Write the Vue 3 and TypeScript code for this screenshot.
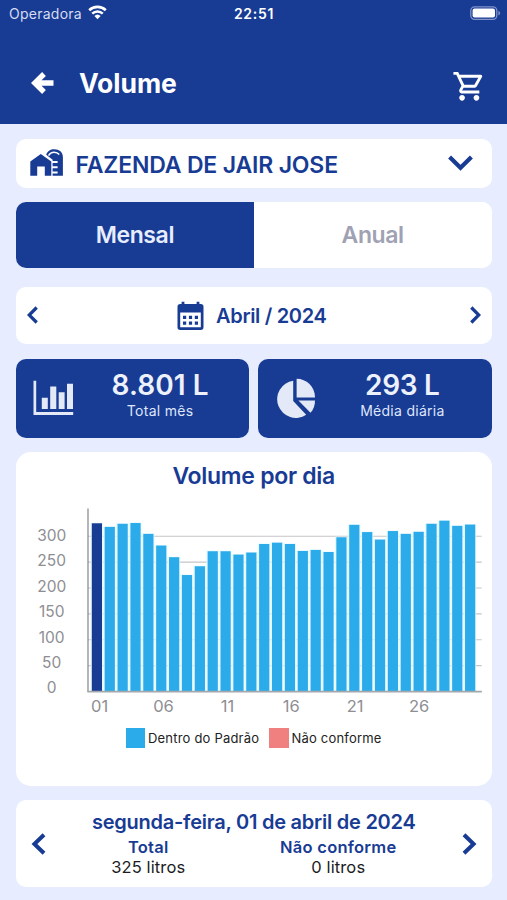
<script setup lang="ts">
interface Bar {
  day: number
  value: number
  x: number
  y: number
  height: number
}

const BASE_Y = 183.5
const PX_PER_LITRE = 25.88 / 50
const FIRST_X = 71.8
const PITCH = 12.87

const volumes: number[] = [
  325, 318, 324, 325.5, 304.5, 282, 259.5, 225, 242, 271, 271, 264.5, 268.5, 285, 287.5,
  285, 271.5, 273.5, 269.5, 298, 322, 308, 293.5, 310, 304.5, 308.5, 324, 330, 320, 322.5,
]

const bars: Bar[] = volumes.map((value, i) => ({
  day: i + 1,
  value,
  x: FIRST_X + i * PITCH,
  y: BASE_Y - value * PX_PER_LITRE,
  height: value * PX_PER_LITRE,
}))

const ticks = [300, 250, 200, 150, 100, 50, 0].map((value, i) => ({
  value,
  line: BASE_Y - value * PX_PER_LITRE,
  label: 33 + i * 25.4,
}))

const dayLabels = ['01', '06', '11', '16', '21', '26'].map((text, i) => ({
  text,
  x: 79.6 + i * 63.9,
}))
</script>

<template>
  <div class="screen">
    <header class="header">
      <div class="status">
        <div class="carrier">
          <span class="carrier-name">Operadora</span>
          <svg class="wifi" viewBox="0 0 18 14" width="19" height="14.500">
            <path d="M1 5.100a11.400 11.400 0 0 1 16 0" fill="none" stroke="#fff" stroke-width="2.500" />
            <path d="M3.900 8.300a7.200 7.200 0 0 1 10.200 0" fill="none" stroke="#fff" stroke-width="2.400" />
            <path d="M9 13.800 6 10.700a4.300 4.300 0 0 1 6 0z" fill="#fff" />
          </svg>
        </div>
        <span class="time">22:51</span>
        <svg class="battery" viewBox="0 0 31 15" width="31" height="15">
          <rect x=".8" y=".8" width="26" height="12.600" rx="3.800" fill="none" stroke="#8193c7" stroke-width="1.300" />
          <rect x="2.600" y="2.600" width="22.400" height="9" rx="2" fill="#fff" />
          <path d="M28.400 5v4.400c1-.4 1.700-1.200 1.700-2.200s-.7-1.800-1.700-2.200z" fill="#8193c7" />
        </svg>
      </div>
      <div class="titlebar">
        <svg class="back" viewBox="0 0 24 24" width="24" height="24">
          <path d="M13 3 3.800 12l9.200 9M4.500 12h18" fill="none" stroke="#fff" stroke-width="5.400" />
        </svg>
        <h1 class="title">Volume</h1>
        <svg class="cart" viewBox="0 0 24 24" width="34.500" height="34.500">
          <path fill="#fff" d="M15.550 13c.75 0 1.410-.41 1.750-1.030l3.580-6.490A.996.996 0 0 0 20.010 4H5.210l-.94-2H1v2h2l3.600 7.590-1.350 2.440C4.520 15.370 5.480 17 7 17h12v-2H7l1.100-2h7.450zM6.160 6h12.150l-2.760 5H8.530L6.160 6zM7 18c-1.100 0-1.990.9-1.990 2S5.900 22 7 22s2-.9 2-2-.9-2-2-2zm10 0c-1.100 0-1.990.9-1.990 2s.89 2 1.990 2 2-.9 2-2-.9-2-2-2z" />
        </svg>
      </div>
    </header>

    <main class="content">
      <section class="card farm">
        <svg class="barn" viewBox="0 0 34 28" width="34" height="28">
          <path fill="#183b94" d="M.3 12.400 10.800 5 21.300 12.400V26.800H14.800V17.600H7.200v9.200H.3z" />
          <path fill="#183b94" d="M22.600 10.700 16.200 5.800C17.200 2.300 20.400.3 24.300.3c5 0 8.600 3 8.600 7.600v18.900H22.600V24.400h5v-2h-5v-3.200h5v-2h-5v-3.200h5v-2h-5z" />
          <path d="M18.600 6.600c1.200-2.200 3.100-3.300 5.500-3.300 2.200 0 4 .9 5.200 2.300" fill="none" stroke="#fff" stroke-width="1.500" />
        </svg>
        <span class="farm-name">FAZENDA DE JAIR JOSE</span>
        <svg class="chev-down" viewBox="0 0 25 16" width="25" height="16">
          <path d="m1.600 2 10.900 10.700L23.400 2" fill="none" stroke="#183b94" stroke-width="4.200" />
        </svg>
      </section>

      <div class="tabs">
        <button class="tab active"><span>Mensal</span></button>
        <button class="tab"><span>Anual</span></button>
      </div>

      <section class="card month">
        <svg viewBox="0 0 11 18" width="11" height="18">
          <path d="M9.700 1.500 2.200 9l7.500 7.500" fill="none" stroke="#183b94" stroke-width="3.200" />
        </svg>
        <div class="month-label">
          <svg viewBox="0 0 27 30" width="27" height="30">
            <path fill="#183b94" fill-rule="evenodd" d="M4.600.8h2.800V3h12.200V.8h2.800V3h1.400a2.700 2.700 0 0 1 2.700 2.700v20.600a2.700 2.700 0 0 1-2.700 2.700H3.200a2.700 2.700 0 0 1-2.700-2.700V5.700A2.700 2.700 0 0 1 3.200 3h1.400zM3.200 11.500v14.800h20.600V11.500z" />
            <path fill="#183b94" d="M6 14.800h3.200V18H6zm5.900 0h3.200V18h-3.200zm5.900 0H21V18h-3.200zM6 20.600h3.200v3.200H6zm5.900 0h3.200v3.200h-3.200zm5.900 0H21v3.200h-3.200z" />
          </svg>
          <span>Abril / 2024</span>
        </div>
        <svg viewBox="0 0 11 18" width="11" height="18">
          <path d="M1.300 1.500 8.800 9l-7.500 7.500" fill="none" stroke="#183b94" stroke-width="3.200" />
        </svg>
      </section>

      <div class="stats">
        <section class="stat">
          <svg viewBox="0 0 41 36" width="41" height="36">
            <path fill="#e4e9f7" d="M.5.7h2.700v31.400h37v3H.5z" />
            <path fill="#e4e9f7" d="M8.800 17.700h6v11.200h-6zM17.200 6.500h6.100v22.400h-6.100zM25.700 12.200h5.900v16.700h-5.900zM34 3.800h6v25.100h-6z" />
          </svg>
          <div class="stat-text">
            <strong class="v1">8.801 L</strong>
            <span>Total mês</span>
          </div>
        </section>
        <section class="stat second">
          <svg viewBox="0 0 41 41" width="41" height="41">
            <path fill="#e4e9f7" d="M18.200 2.700V23l13 13.800A18.700 18.700 0 1 1 18.200 2.700z" />
            <path fill="#e4e9f7" d="M21.600.7C31.500.7 40 8.500 40 19.500H21.600z" />
            <path fill="#e4e9f7" d="M23.400 22.500H40c0 5-1.500 9-4.500 12.300z" />
          </svg>
          <div class="stat-text">
            <strong class="v2">293 L</strong>
            <span>Média diária</span>
          </div>
        </section>
      </div>

      <section class="card chart">
        <h2>Volume por dia</h2>
        <svg class="plot" viewBox="0 0 450 210" width="450" height="210">
          <g v-for="t in ticks" :key="t.value">
            <line x1="68" x2="461.700" :y1="t.line" :y2="t.line" stroke="#c6c6c9" stroke-width="1.100" />
            <text class="tick" x="31.700" :y="t.label" text-anchor="middle">{{ t.value }}</text>
          </g>
          <rect
            v-for="b in bars"
            :key="'g' + b.day"
            :x="b.x - 1.4"
            :y="b.y - 0.6"
            width="12.600"
            :height="b.height"
            fill="#e2f8ff"
            fill-opacity="0.850"
          />
          <rect
            v-for="b in bars"
            :key="b.day"
            :x="b.x"
            :y="b.y"
            width="10.200"
            :height="b.height"
            :fill="b.day === 1 ? '#183b94' : '#2cabea'"
          />
          <line x1="68" x2="68" y1="0.500" y2="184" stroke="#8e8e90" stroke-width="1.300" />
          <line x1="67.400" x2="461.700" y1="183.600" y2="183.600" stroke="#a4a7ab" stroke-width="1.700" />
          <text v-for="d in dayLabels" :key="d.text" class="day" :x="d.x" y="204" text-anchor="middle">{{ d.text }}</text>
        </svg>
        <div class="legend">
          <i class="swatch ok"></i><span class="l1">Dentro do Padrão</span>
          <i class="swatch bad"></i><span class="l2">Não conforme</span>
        </div>
      </section>

      <section class="card day-card">
        <svg viewBox="0 0 15 22" width="15" height="22">
          <path d="M13 1.700 3.400 11l9.600 9.300" fill="none" stroke="#183b94" stroke-width="4" />
        </svg>
        <div class="day-info">
          <h3>segunda-feira, 01 de abril de 2024</h3>
          <div class="totals">
            <div><b class="total">Total</b><span>325 litros</span></div>
            <div><b class="nc">Não conforme</b><span>0 litros</span></div>
          </div>
        </div>
        <svg viewBox="0 0 15 22" width="15" height="22">
          <path d="M2 1.700 11.600 11 2 20.300" fill="none" stroke="#183b94" stroke-width="4" />
        </svg>
      </section>
    </main>
  </div>
</template>

<style>
body {
  background: #e7edff;
}
</style>

<style scoped>
.screen {
  width: 507px;
  height: 900px;
  overflow: hidden;
  background: #e7edff;
  font-family: Inter, "Liberation Sans", sans-serif;
  color: #183b94;
}
.screen * {
  box-sizing: border-box;
}
.screen svg {
  display: block;
  flex: none;
}
.header {
  height: 123.5px;
  background: #183b94;
  color: #fff;
}
.status {
  height: 27px;
  display: grid;
  grid-template-columns: 1fr auto 1fr;
  align-items: center;
  padding: 0 6px 0 9px;
}
.carrier {
  display: flex;
  align-items: center;
  gap: 6px;
}
.carrier-name {
  width: 73px;
  font-size: 14px;
  letter-spacing: 0.25px;
  color: #d5dcf0;
}
.wifi {
  margin-top: -2px;
}
.time {
  font-size: 14px;
  font-weight: 600;
  letter-spacing: 0.7px;
  margin-right: 2px;
}
.battery {
  justify-self: end;
}
.titlebar {
  height: 96px;
  display: flex;
  align-items: center;
  padding: 15px 20.5px 0 31px;
}
.title {
  flex: 1;
  margin: 0 0 0 24px;
  font-size: 26.5px;
  line-height: 32px;
  font-weight: 700;
  letter-spacing: -0.05px;
}
.cart {
  margin-top: 7px;
}
.content {
  padding: 15px 15.5px 0 16px;
}
.card {
  background: #fff;
  border-radius: 10px;
}
.farm {
  height: 49px;
  display: flex;
  align-items: center;
  padding: 0 18.5px 0 14px;
}
.farm-name {
  flex: 1;
  margin-left: 11.5px;
  font-size: 23px;
  font-weight: 600;
  letter-spacing: -0.17px;
  padding-top: 4px;
}
.tabs {
  margin-top: 14px;
  height: 66px;
  display: grid;
  grid-template-columns: 1fr 1fr;
  border-radius: 10px;
  overflow: hidden;
  background: #fff;
}
.tab {
  border: 0;
  background: #fff;
  color: #a0a2b4;
  font: 600 23px Inter, "Liberation Sans", sans-serif;
  letter-spacing: -0.4px;
}
.tab.active {
  background: #183b94;
  color: #e7edff;
}
.month {
  margin-top: 19px;
  height: 57.5px;
  display: flex;
  align-items: center;
  justify-content: space-between;
  padding: 0 11px;
}
.month-label {
  display: flex;
  align-items: center;
  gap: 12px;
  font-size: 20px;
  font-weight: 600;
  letter-spacing: -0.33px;
  padding: 1px 4px 0 0;
}
.stats {
  margin-top: 14.5px;
  display: grid;
  grid-template-columns: 1fr 1fr;
  gap: 9px;
}
.stat {
  height: 79px;
  display: flex;
  align-items: center;
  padding-left: 17px;
  border-radius: 10px;
  background: #183b94;
  color: #dfe6fa;
}
.stat-text {
  flex: 1;
  display: flex;
  flex-direction: column;
  align-items: center;
  padding: 0 3px 5px 0;
}
.stat-text strong {
  font-size: 28px;
  line-height: 30px;
  font-weight: 600;
  color: #edf1fc;
}
.stat-text .v1 {
  letter-spacing: 0.1px;
}
.stat-text .v2 {
  letter-spacing: -0.3px;
}
.stat-text span {
  font-size: 14px;
  line-height: 21px;
  letter-spacing: 0.28px;
}
.chart {
  margin-top: 14.5px;
  height: 333.5px;
  border-radius: 15px;
  padding: 8px 4px 0;
}
.chart h2 {
  margin: 0;
  font-size: 23px;
  line-height: 32px;
  font-weight: 600;
  letter-spacing: -0.28px;
  text-align: center;
}
.plot {
  margin-top: 16px;
  overflow: visible;
}
.tick {
  font-size: 15.5px;
  fill: #8e8e93;
}
.day {
  font-size: 16.5px;
  fill: #8e8e93;
}
.legend {
  display: flex;
  align-items: center;
  margin: 10px 0 0 105.5px;
  font-size: 13px;
  letter-spacing: 0.2px;
  color: #222;
  white-space: nowrap;
}
.swatch {
  width: 19.5px;
  height: 19.5px;
}
.legend span {
  margin-left: 3px;
}
.ok {
  background: #2cabea;
}
.bad {
  background: #f08080;
}
.l1 {
  width: 121px;
}
.day-card {
  margin-top: 14.5px;
  height: 87px;
  display: flex;
  align-items: center;
  padding: 0 14.5px;
}
.day-info {
  flex: 1;
  white-space: nowrap;
  margin-top: -2px;
}
.day-info h3 {
  margin: 0;
  font-size: 20px;
  line-height: 28px;
  font-weight: 600;
  letter-spacing: -0.24px;
  text-align: center;
}
.totals {
  display: grid;
  grid-template-columns: 190px 190px;
  justify-content: center;
  padding-right: 21px;
  margin-top: 1px;
}
.totals div {
  display: flex;
  flex-direction: column;
  align-items: center;
  font-size: 16.5px;
  line-height: 20.5px;
  letter-spacing: 0.12px;
}
.totals b {
  font-weight: 600;
  letter-spacing: 0.25px;
}
.totals span {
  color: #1c1c1e;
}
</style>
